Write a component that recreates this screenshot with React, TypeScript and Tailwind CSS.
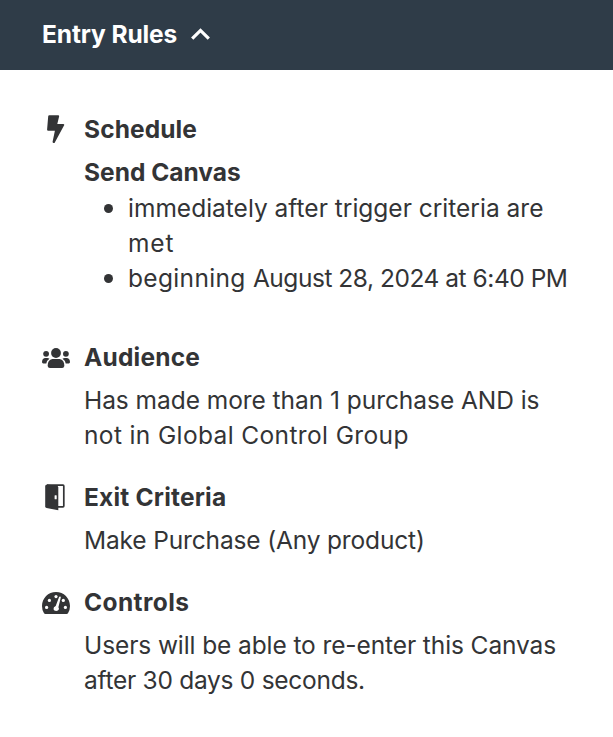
import type { ReactNode } from "react";

function BoltIcon() {
  return (
    <svg width="18" height="28" viewBox="0 0 18 28" fill="currentColor">
      <path d="M2.3 .3H11.2Q12.4 .3 12.1 1.4L10.3 9H16.2Q17.8 9.1 17 10.6L7.8 27.4Q7.4 28.2 6.4 28Q5.4 27.7 5.6 26.7L7.9 15.8H1.2Q0 15.7 .1 14.6L1.2 1.3Q1.3 .4 2.3 .3Z" />
    </svg>
  );
}

function UsersIcon() {
  return (
    <svg width="28" height="20" viewBox="0 0 28 20" fill="currentColor">
      <circle cx="14" cy="5" r="4.9" />
      <circle cx="4.1" cy="5.8" r="2.9" />
      <circle cx="23.9" cy="5.8" r="2.9" />
      <path d="M10.3 11H17.7Q22.2 12 22.3 17.3V18Q22 19.8 20.2 20H7.8Q6 19.8 5.7 18V17.3Q5.8 12 10.3 11Z" />
      <path d="M2.9 10H5.2Q6.6 10 7.5 10.8Q4.7 12.5 4.3 15.5H1.2Q0 15.3 0 14.1Q.1 10.6 2.9 10Z" />
      <path d="M25.1 10H22.8Q21.4 10 20.5 10.8Q23.3 12.5 23.7 15.5H26.8Q28 15.3 28 14.1Q27.9 10.6 25.1 10Z" />
    </svg>
  );
}

function DoorIcon() {
  return (
    <svg width="20" height="27" viewBox="0 0 20 27">
      <path d="M2 1.2H18Q18.8 1.2 18.8 2V22Q18.8 22.8 18 22.8H13" fill="none" stroke="currentColor" strokeWidth="1.7" />
      <path d="M2 .4L11.8 1.8Q13.3 2.1 13.3 3.5V26.3L1.6 24Q.2 23.7 .2 22.3V2Q.3 .5 2 .4Z" fill="currentColor" />
      <rect x="9.6" y="11.2" width="2.1" height="4.1" rx=".6" fill="#fff" />
    </svg>
  );
}

function GaugeIcon() {
  return (
    <svg width="28" height="22" viewBox="0 0 28 22">
      <path d="M14 0C6.2 0 0 6.2 0 14Q0 18 1.9 21.1Q2.4 22 3.4 22H24.6Q25.6 22 26.1 21.1Q28 18 28 14C28 6.2 21.8 0 14 0Z" fill="currentColor" />
      <g fill="#fff">
        <circle cx="4.6" cy="15.4" r="1.6" />
        <circle cx="7.4" cy="8.4" r="1.6" />
        <circle cx="14" cy="4.6" r="1.6" />
        <circle cx="21.3" cy="8.4" r="1.6" />
        <circle cx="23.4" cy="15.4" r="1.6" />
        <path d="M17.1 5.1Q17.5 4.3 18.3 4.6Q19 4.9 18.8 5.6L16.4 15.2Q17.2 16.2 16.8 17.6Q16.3 18.9 14.2 18.9Q11.9 18.9 11.5 17.2Q11.3 15 13.7 14.1Z" />
      </g>
    </svg>
  );
}

function Section({ icon, title, tracking = "", className = "", children }: {
  icon: ReactNode;
  title: string;
  tracking?: string;
  className?: string;
  children: ReactNode;
}) {
  return (
    <section className={`flex ${className}`}>
      <div className="flex h-[35px] w-[42px] shrink-0 items-center">{icon}</div>
      <div>
        <h3 className={`mb-2 font-bold ${tracking}`}>{title}</h3>
        {children}
      </div>
    </section>
  );
}

function Bullet({ children }: { children: ReactNode }) {
  return (
    <li className="flex">
      <span className="mt-[13px] mr-[15px] ml-5 size-[9px] shrink-0 rounded-full bg-[#333436]" />
      <div>{children}</div>
    </li>
  );
}

export default function App() {
  return (
    <div className="h-[737px] w-full overflow-hidden bg-white font-['Inter',sans-serif] text-[24.5px] leading-[35px] whitespace-nowrap text-[#333436]">
      <header className="flex h-[70px] items-center bg-[#2f3c48] pb-0.5 pl-[42px] text-white">
        <h2 className="w-[149px] font-bold tracking-[-0.1px]">Entry Rules</h2>
        <svg width="19" height="12" viewBox="0 0 19 12" fill="none" stroke="currentColor" strokeWidth="3.2">
          <path d="M1.2 10.7L9.5 2.4L17.8 10.7" />
        </svg>
      </header>
      <main className="pt-[42px] pl-[42px]">
        <Section icon={<div className="mb-0.5 ml-[5px]"><BoltIcon /></div>} title="Schedule" tracking="tracking-[0.1px]">
          <h4 className="font-bold">Send Canvas</h4>
          <ul className="mt-px">
            <Bullet>
              <p>immediately after trigger criteria are</p>
              <p className="tracking-[0.9px]">met</p>
            </Bullet>
            <Bullet>
              <p className="tracking-[-0.47px]">
                <span className="tracking-[0.34px]">beginning </span>August 28, 2024 at 6:40 PM
              </p>
            </Bullet>
          </ul>
        </Section>
        <Section className="mt-11" icon={<UsersIcon />} title="Audience" tracking="tracking-[0.2px]">
          <p className="tracking-[-0.05px]">Has made more than 1 purchase AND is</p>
          <p className="tracking-[0.37px]">not in Global Control Group</p>
        </Section>
        <Section className="mt-[27px]" icon={<div className="ml-[3px]"><DoorIcon /></div>} title="Exit Criteria" tracking="tracking-[0.2px]">
          <p className="tracking-[-0.15px]">Make Purchase (Any product)</p>
        </Section>
        <Section className="mt-[27px]" icon={<GaugeIcon />} title="Controls" tracking="tracking-[0.4px]">
          <p className="tracking-[-0.1px]">Users will be able to re-enter this Canvas</p>
          <p className="tracking-[-0.27px]">after 30 days 0 seconds.</p>
        </Section>
      </main>
    </div>
  );
}
